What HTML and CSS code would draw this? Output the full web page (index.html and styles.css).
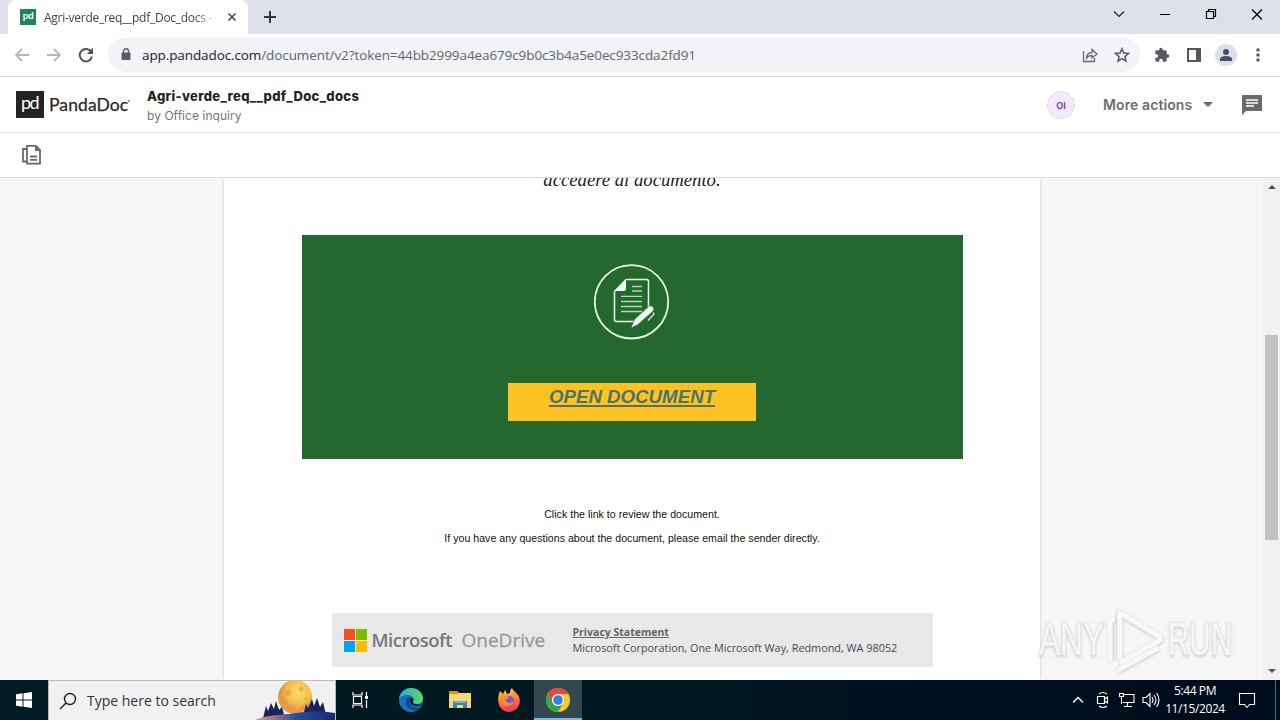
FILE: index.html
```html
<!DOCTYPE html>
<html lang="en">
<head>
    <meta charset="UTF-8">
    <meta name="viewport" content="width=device-width, initial-scale=1.0">
    <title>Agri-verde_req__pdf_Doc_docs</title>
    <link rel="stylesheet" href="styles.css">
</head>
<body>
    <div class="desktop">
        <!-- Tab strip -->
        <div class="tab-strip">
            <div class="tab">
                <span class="favicon">pd</span>
                <span class="tab-title">Agri-verde_req__pdf_Doc_docs -</span>
                <svg class="tab-close" width="10" height="10" viewBox="0 0 10 10"><path d="M1.5 1.5l7 7M8.5 1.5l-7 7" stroke="#45484c" stroke-width="1.6"/></svg>
            </div>
            <svg class="new-tab" width="14" height="14" viewBox="0 0 14 14"><path d="M7 1v12M1 7h12" stroke="#33363c" stroke-width="2"/></svg>
            <div class="window-controls">
                <svg width="46" height="28" viewBox="0 0 46 28"><path d="M18 11.5l5 5 5-5" fill="none" stroke="#222" stroke-width="1.2"/></svg>
                <svg width="46" height="28" viewBox="0 0 46 28"><path d="M18 14.5h10" stroke="#000"/></svg>
                <svg width="46" height="28" viewBox="0 0 46 28"><path d="M18.5 11.500h7v7h-7zM20.500 11.500v-2h7v7h-2" fill="none" stroke="#000" stroke-width="1.200"/></svg>
                <svg width="46" height="28" viewBox="0 0 46 28"><path d="M18 9.500l10 10M28 9.500l-10 10" stroke="#000" stroke-width="1.200"/></svg>
            </div>
        </div>

        <!-- Address bar -->
        <div class="browser-bar">
            <svg class="nav-icon" width="16" height="16" viewBox="0 0 16 16"><path d="M15 8H2M8 2L2 8l6 6" fill="none" stroke="#b4b6b9" stroke-width="1.8"/></svg>
            <svg class="nav-icon" width="16" height="16" viewBox="0 0 16 16"><path d="M1 8h13M8 2l6 6-6 6" fill="none" stroke="#b4b6b9" stroke-width="1.8"/></svg>
            <svg class="nav-icon" width="16" height="16" viewBox="0 0 16 16"><path d="M13.300 5A6.200 6.200 0 1 0 14 9.500" fill="none" stroke="#4c4f54" stroke-width="1.900"/><path d="M15 .800v6.200H8.800z" fill="#4c4f54"/></svg>
            <div class="address">
                <svg width="10" height="13" viewBox="0 0 10 13"><path d="M2.500 6V3.300a2.500 2.500 0 0 1 5 0V6" fill="none" stroke="#5a5d62" stroke-width="1.400"/><rect x=".5" y="4.500" width="9" height="7.500" rx="1" fill="#5a5d62"/></svg>
                <span class="url"><b>app.pandadoc.com</b>/document/v2?token=44bb2999a4ea679c9b0c3b4a5e0ec933cda2fd91</span>
                <svg class="share" width="16" height="16" viewBox="0 0 16 16"><path d="M1.500 4v10.500h11V11M4.500 11c.3-4 2.500-5.500 5.500-5.500v-3L15 7l-5 4V8.500C7.500 8.500 6 9 4.500 11z" fill="none" stroke="#666a6e" stroke-width="1.300"/></svg>
                <svg width="16" height="16" viewBox="0 0 16 16"><path d="M8 1.700l1.800 4.400 4.700.4-3.600 3.100 1.100 4.600L8 11.700l-4 2.500 1.100-4.600L1.500 6.500l4.700-.4z" fill="none" stroke="#565a60" stroke-width="1.500"/></svg>
            </div>
            <div class="extensions">
                <svg width="16" height="16" viewBox="0 0 24 24"><path fill="#565a62" d="M20.500 11H19V7a2 2 0 0 0-2-2h-4V3.500a2.500 2.500 0 0 0-5 0V5H4a2 2 0 0 0-2 2v3.800h1.500a2.700 2.700 0 0 1 0 5.400H2V20a2 2 0 0 0 2 2h3.800v-1.500a2.700 2.700 0 0 1 5.400 0V22H17a2 2 0 0 0 2-2v-4h1.500a2.500 2.500 0 0 0 0-5z"/></svg>
                <svg width="16" height="16" viewBox="0 0 16 16"><path d="M1 1h14v14H1zM3 3v10h7V3z" fill="#54575d" fill-rule="evenodd"/></svg>
                <span class="profile"><svg width="14" height="14" viewBox="0 0 14 14"><circle cx="7" cy="4" r="3" fill="#494f66"/><path d="M1 13v-2c0-2 3-3 6-3s6 1 6 3v2z" fill="#494f66"/></svg></span>
                <svg class="menu-dots" width="4" height="14" viewBox="0 0 4 14"><path d="M.5.5h3v3h-3zM.5 5.500h3v3h-3zM.5 10.500h3v3h-3z" fill="#54575d"/></svg>
            </div>
        </div>

        <!-- PandaDoc header -->
        <div class="app-header">
            <span class="logo-mark">pd</span>
            <span class="logo-text">PandaDoc<i></i></span>
            <div class="doc-info">
                <div class="doc-name">Agri-verde_req__pdf_Doc_docs</div>
                <div class="doc-author">by Office inquiry</div>
            </div>
            <span class="avatar">OI</span>
            <span class="more-actions">More actions</span>
            <span class="caret"></span>
            <svg class="chat" width="20" height="20" viewBox="0 0 20 20"><path d="M0 0h20v16H4l-4 4z" fill="#6b6b6b"/><path d="M4 5h12M4 8h12M4 11h8" stroke="#fff" stroke-width="1.500"/></svg>
        </div>
        <div class="app-toolbar">
            <svg width="20" height="20" viewBox="0 0 20 20"><path d="M5 .900h9l4 4.300V18.600H5zM5 4H1v12.500h4M8 11.500h7M8 14.800h7" fill="none" stroke="#6a6a6a" stroke-width="1.800"/><path d="M13 1v5h5z" fill="#6a6a6a"/></svg>
        </div>

        <!-- Document -->
        <div class="viewer">
            <div class="page">
                <div class="intro">accedere al documento.</div>
                <div class="banner">
                    <svg class="doc-icon" width="76" height="76" viewBox="0 0 76 76">
                        <circle cx="37.500" cy="37.800" r="36.700" fill="none" stroke="#e2f7df" stroke-width="1.800"/>
                        <path d="M32 15.500h20.500q2 0 2 2V45M41 57.500H22.500q-2 0-2-2V27.500L32 15.500" fill="none" stroke="#e9fbe6" stroke-width="1.500"/>
                        <path d="M21 27L32 16v9q0 2-2 2z" fill="#f3fff0"/>
                        <path d="M38 22.500h10M38 27h10M27 32.300h21M27 37.500h21M27 42.500h21M27 47.500h21" stroke="#b4d9ae" stroke-width="1.300"/>
                        <path d="M37 64l3.500-8.500L54 43q3-2.500 5 0 2 2-.5 4.500L44 60.500z" fill="#f3fff0" stroke="#25682f" stroke-width=".6"/>
                        <path d="M59 48.500l1 1.500-6 6.500" fill="none" stroke="#d2efcc" stroke-width="1.200"/>
                    </svg>
                    <div class="open-button"><span>OPEN DOCUMENT</span></div>
                </div>
                <p class="note">Click the link to review the document.</p>
                <p class="note note-wide">If you have any questions about the document, please email the sender directly.</p>
                <div class="ms-footer">
                    <div class="ms-logo"><i></i><i></i><i></i><i></i></div>
                    <span class="ms-name">Microsoft</span>
                    <span class="od-name">OneDrive</span>
                    <div class="ms-address">
                        <u>Privacy Statement</u>
                        <span>Microsoft Corporation, One Microsoft Way, Redmond, WA 98052</span>
                    </div>
                </div>
            </div>
            <div class="scrollbar"><div class="thumb"></div></div>
            <svg class="watermark" width="204" height="72" viewBox="0 0 204 72">
                <g class="mark-shade"><text x="3" y="52" textLength="65" lengthAdjust="spacingAndGlyphs">ANY</text><text x="132" y="52" textLength="64" lengthAdjust="spacingAndGlyphs">RUN</text><path d="M75 57V19q0-3 5-3M84 57V10l40 24v3L84 60M82 67l40-22"/></g>
                <g class="mark-light"><text x="3" y="51" textLength="65" lengthAdjust="spacingAndGlyphs">ANY</text><text x="132" y="51" textLength="64" lengthAdjust="spacingAndGlyphs">RUN</text><path d="M74 57V19q0-4 5-4M84 56V9l40 24v3L84 59M82 66l40-22"/></g>
            </svg>
        </div>

        <!-- Taskbar -->
        <div class="taskbar">
            <div class="start"><svg width="16" height="16" viewBox="0 0 16 16"><path d="M0 2.200L6.500 1.300V7.500H0zM7.500 1.200L16 0v7.500H7.500zM0 8.500h6.500v6.200L0 13.800zM7.500 8.500H16V16l-8.500-1.200z" fill="#fff"/></svg></div>
            <div class="search">
                <svg width="18" height="18" viewBox="0 0 18 18"><circle cx="11" cy="7" r="5.500" fill="none" stroke="#222" stroke-width="1.400"/><path d="M7 11l-6 6" stroke="#222" stroke-width="1.400"/></svg>
                <span>Type here to search</span>
                <svg class="moon" width="80" height="39" viewBox="0 0 80 39">
                    <defs>
                        <linearGradient id="hill"><stop offset="0" stop-color="#d59a91"/><stop offset=".25" stop-color="#a06f82"/><stop offset=".5" stop-color="#294ca0"/><stop offset="1" stop-color="#182a70"/></linearGradient>
                        <radialGradient id="moonFill" cx=".6" cy=".35"><stop offset="0" stop-color="#ffdd72"/><stop offset=".7" stop-color="#f5bd4c"/><stop offset="1" stop-color="#e49a43"/></radialGradient>
                    </defs>
                    <circle cx="40" cy="16" r="17" fill="url(#moonFill)"/>
                    <circle cx="33" cy="12" r="3" fill="#e9aa42"/><circle cx="46" cy="8" r="2.500" fill="#edb24a"/><circle cx="42" cy="25" r="3" fill="#eab050"/><circle cx="51" cy="18" r="2" fill="#edb24a"/>
                    <path d="M8 37l3-12 2 5 3-8 3 6 2-8 3 9 3-3 3 11zM48 35l3-12 2 4 4-9 2 7 3-8 3 9 3-5 3 13z" fill="#17245f"/>
                    <path d="M0 39c12-5 23-5 34-6 15-2 24-4 46-1v7z" fill="url(#hill)"/>
                </svg>
            </div>
            <div class="task task-view"><svg width="18" height="18" viewBox="0 0 18 18"><path d="M2 1v3h9V1M2 17v-3h9v3M2.500 5.500h8v7h-8zM15.500 1v4M15.500 9v8" fill="none" stroke="#fff" stroke-width="1.200"/><path d="M14 5h3v3h-3z" fill="#fff"/></svg></div>
            <div class="task"><svg width="24" height="24" viewBox="0 0 24 24">
                <defs><linearGradient id="edgeTop"><stop offset="0" stop-color="#2ba9e1"/><stop offset="1" stop-color="#61d65b"/></linearGradient></defs>
                <circle cx="12" cy="12" r="12" fill="#1870bd"/>
                <path d="M0 11C1 4 6 0 12 0c7 0 12 5 12 10 0 4-3 6-6 6-3 0-5-1-4-3 2-3-1-6-5-6-5 0-8 2-9 4z" fill="url(#edgeTop)"/>
                <path d="M9 9c-4 3-3 12 5 13 3 .5 6-.5 8-3-3 1-7 1-9-1-3-2-3-6-1-8z" fill="#114b91"/>
                <path d="M12 10c3 0 3 2 2 3-1 3 5 5 9 2-1 3-6 4-9 2-3-1-4-5-2-7z" fill="#001b27"/>
            </svg></div>
            <div class="task"><svg width="22" height="20" viewBox="0 0 22 20"><path d="M0 1h8l2 2h12v4H0z" fill="#dc941c"/><path d="M0 3h22v15H0z" fill="#f9d76f"/><path d="M0 1h8l2 2-2 1H0z" fill="#dc941c"/><path d="M4 18v-7h14v7h-4v-3H8v3z" fill="#3384bd"/><path d="M5 12h12" stroke="#69b1db" stroke-width="2"/></svg></div>
            <div class="task"><svg width="24" height="24" viewBox="0 0 24 24">
                <defs><linearGradient id="fox" x2=".2" y2="1"><stop offset="0" stop-color="#ffdd43"/><stop offset=".5" stop-color="#ff8a32"/><stop offset="1" stop-color="#f23a54"/></linearGradient></defs>
                <path d="M3 3l3 3 2-4 2 4 3-1c0-3 1-4 2-5 1 3 4 4 6 7 5 8-1 17-9 17C4 24-2 15 3 3z" fill="url(#fox)"/><circle cx="12" cy="13" r="5.300" fill="#8552cc"/><path d="M4 7c4-1 6 1 8 2-1 2-3 2-4 3 2 4 6 4 9 1-1 6-10 7-13 1z" fill="#ff8d28"/>
            </svg></div>
            <div class="task active"><svg width="24" height="24" viewBox="0 0 24 24"><circle cx="12" cy="12" r="12" fill="#fbc72d"/><path d="M1.600 6A12 12 0 0 1 22.400 6H12a6 6 0 0 0-5.200 9z" fill="#e6483d"/><path d="M1.600 6l5.200 9A6 6 0 0 0 12 18l5.200-3L12 24A12 12 0 0 1 1.600 6z" fill="#31a652"/><circle cx="12" cy="12" r="6" fill="#fff"/><circle cx="12" cy="12" r="4.800" fill="#347feb"/></svg></div>
            <div class="tray">
                <svg width="12" height="8" viewBox="0 0 12 8"><path d="M1 6.500l5-5 5 5" fill="none" stroke="#fff" stroke-width="1.300"/></svg>
                <svg class="meet" width="14" height="18" viewBox="0 0 14 18"><path d="M1.500 5.500h7v7h-7zM8.500 8l3-2v6l-3-2M3 3q4-3 8 0M3 15q4 3 8 0" fill="none" stroke="#fff" stroke-width="1.200"/></svg>
                <svg width="18" height="16" viewBox="0 0 18 16"><path d="M5 2.500h11v8H5M9.500 10.500V14M6 14.500h8M1.500 1.500h4v3h-4zM3.500 5v7" fill="none" stroke="#fff" stroke-width="1.100"/></svg>
                <svg width="18" height="16" viewBox="0 0 18 16"><path d="M1 5.500h3l4-4v13l-4-4H1zM10 5q2 3 0 6M12 3q4 5 0 10M14.500 1q5 7 0 14" fill="none" stroke="#fff" stroke-width="1.100"/></svg>
                <div class="clock"><span>5:44 PM</span><span class="date">11/15/2024</span></div>
                <svg class="notify" width="18" height="17" viewBox="0 0 18 17"><path d="M1.500 1.500h15v11h-5l-2.500 3-2.500-3h-5z" fill="none" stroke="#fff" stroke-width="1.100"/></svg>
                <div class="show-desktop"></div>
            </div>
        </div>
    </div>
</body>
</html>
```

FILE: styles.css
```css
* {
    margin: 0;
    padding: 0;
    box-sizing: border-box;
}

body {
    font-family: "Open Sans", sans-serif;
    background: #fff;
    overflow: hidden;
}

svg {
    display: block;
    flex-shrink: 0;
}

.desktop {
    width: 1280px;
    height: 720px;
    display: flex;
    flex-direction: column;
    white-space: nowrap;
}

.tab-strip {
    height: 34px;
    background: #dee1e9;
    display: flex;
    padding-left: 8px;
}

.tab {
    width: 240px;
    background: #fff;
    border-radius: 8px 8px 0 0;
    display: flex;
    align-items: center;
    padding-left: 12px;
}

.favicon {
    width: 16px;
    height: 16px;
    background: #218260;
    color: #fff;
    font: bold 10px/13px Lato, sans-serif;
    text-align: center;
    letter-spacing: -.5px;
}

.tab-title {
    width: 175px;
    margin-left: 8px;
    font-size: 12px;
    letter-spacing: -.27px;
    color: #414347;
    -webkit-mask-image: linear-gradient(90deg, #000 150px, transparent 175px);
}

.tab-close {
    margin-left: 8px;
}

.new-tab {
    margin: 10px 0 0 15px;
}

.window-controls {
    display: flex;
    margin-left: auto;
}

.browser-bar {
    height: 43px;
    border-bottom: 1px solid #dadada;
    display: flex;
    align-items: center;
    padding: 0 20px 1px 14px;
}

.nav-icon {
    margin-right: 16px;
}

.address {
    width: 1032px;
    height: 34px;
    margin-left: -2px;
    background: #f1f3f6;
    border-radius: 17px;
    display: flex;
    align-items: center;
    padding: 0 10px 0 13px;
}

.url {
    margin-left: 11px;
    font-size: 13.5px;
    letter-spacing: -.1px;
    color: #626569;
}

.url b {
    font-weight: normal;
    color: #202226;
}

.share {
    margin: 0 16px 0 auto;
}

.extensions {
    display: flex;
    align-items: center;
    margin-left: 14px;
}

.extensions > svg:nth-child(2) {
    margin: 0 13px 0 16px;
}

.profile {
    width: 22px;
    height: 22px;
    border-radius: 50%;
    background: #dce0eb;
    display: flex;
    align-items: center;
    justify-content: center;
}

.menu-dots {
    margin-left: 19px;
}

.app-header {
    height: 56px;
    border-bottom: 1px solid #ddd;
    display: flex;
    align-items: center;
    padding: 0 18px 0 16px;
    font-family: Inter, sans-serif;
}

.logo-mark {
    width: 28px;
    height: 27px;
    background: #242424;
    color: #fff;
    font: 18px/23px Lato, sans-serif;
    text-align: center;
    letter-spacing: -1.6px;
    padding-right: 1px;
}

.logo-text {
    width: 82px;
    margin-left: 5px;
    font: 17.5px/27px Lato, sans-serif;
    color: #282828;
    letter-spacing: .1px;
    -webkit-text-stroke: .25px #282828;
}

.logo-text i {
    display: inline-block;
    width: 2px;
    height: 2px;
    border-radius: 50%;
    background: #777;
    vertical-align: 9px;
}

.doc-info {
    width: 240px;
    margin-left: 16px;
    padding-top: 3px;
}

.doc-name {
    font-size: 13px;
    line-height: 19px;
    font-weight: 800;
    letter-spacing: .35px;
    color: #222;
}

.doc-author {
    font-size: 12px;
    line-height: 19px;
    letter-spacing: .05px;
    color: #777;
}

.avatar {
    width: 28px;
    height: 28px;
    margin-left: auto;
    border: 1px solid #e3d9ec;
    border-radius: 50%;
    background: #f3e9fc;
    color: #6a2db0;
    font-size: 9px;
    line-height: 27px;
    font-weight: 600;
    text-align: center;
}

.more-actions {
    width: 90px;
    margin-left: 28px;
    font-size: 14px;
    font-weight: 600;
    letter-spacing: .1px;
    color: #6d6d6d;
}

.caret {
    margin: 0 29px 0 10px;
    border: 5px solid transparent;
    border-top-color: #6d6d6d;
    border-bottom: 0;
}

.app-toolbar {
    height: 45px;
    border-bottom: 1px solid #dcdcdc;
    padding: 12px 22px;
}

.viewer {
    height: 502px;
    background: #f6f6f6;
    position: relative;
    display: flex;
    overflow: hidden;
}

.page {
    width: 816px;
    margin-left: 224px;
    background: #fff;
    box-shadow: 0 0 3px rgba(0, 0, 0, .18);
    display: flex;
    flex-direction: column;
    align-items: center;
}

/* scrolled half way under the toolbar */
.intro {
    height: 66px;
    margin-top: -9px;
    font: italic 18.7px/22px "Liberation Serif", serif;
    color: #222;
}

.banner {
    width: 661px;
    height: 224px;
    background: #25682f;
    display: flex;
    flex-direction: column;
    align-items: center;
    padding-top: 29px;
}

.open-button {
    width: 248px;
    height: 38px;
    margin-top: 43px;
    background: #ffc222;
    text-align: center;
    font: italic bold 18.7px/27px "Liberation Sans", sans-serif;
    color: #4b7469;
    text-decoration: underline;
    text-decoration-thickness: 2px;
    text-decoration-skip-ink: none;
    text-underline-offset: 2px;
}

.note {
    margin-top: 43px;
    font: 10.65px/24px "Liberation Sans", sans-serif;
    color: #111;
}

.note-wide {
    margin-top: 0;
}

.ms-footer {
    width: 601px;
    height: 54px;
    margin-top: 63px;
    background: #e8e8e8;
    display: flex;
    align-items: center;
    padding-left: 12px;
}

.ms-logo {
    width: 23px;
    display: grid;
    grid-template-columns: 11px 11px;
    grid-auto-rows: 11px;
    gap: 1px;
}

.ms-logo i {
    background: #f25022;
}

.ms-logo i:nth-child(2) {
    background: #7fba00;
}

.ms-logo i:nth-child(3) {
    background: #00a4ef;
}

.ms-logo i:nth-child(4) {
    background: #ffb900;
}

.ms-name {
    width: 90px;
    margin-left: 5px;
    padding-bottom: 2px;
    font-size: 18.5px;
    font-weight: 600;
    color: #777;
    letter-spacing: -.5px;
}

.od-name {
    width: 110px;
    font-size: 19px;
    color: #999;
    -webkit-text-stroke: .3px #999;
}

.ms-address {
    display: flex;
    flex-direction: column;
    font-size: 10.85px;
    line-height: 15px;
    color: #484848;
    padding: 0 0 0 1px;
}

.ms-address u {
    font-size: 10.5px;
    font-weight: bold;
    color: #666;
}

.scrollbar {
    width: 17px;
    height: 502px;
    margin-left: auto;
    background: #f1f1f1;
    display: flex;
    flex-direction: column;
    align-items: center;
}

.scrollbar::before {
    content: "";
    margin-top: 7px;
    border: 4px solid transparent;
    border-bottom-color: #505050;
    border-top: 0;
}

.scrollbar::after {
    content: "";
    margin: auto 0 7px;
    border: 4px solid transparent;
    border-top-color: #505050;
    border-bottom: 0;
}

.thumb {
    width: 13px;
    height: 205px;
    margin-top: 146px;
    background: #c1c1c1;
}

.watermark {
    position: absolute;
    left: 1036px;
    top: 426px;
    font: 47px "Liberation Sans", sans-serif;
}

.mark-shade {
    fill: #ccc;
    stroke: #ccc;
    stroke-width: 3;
    opacity: .75;
    filter: blur(1.2px);
}

.mark-light {
    fill: #f6f6f6;
}

.watermark path {
    fill: none;
    stroke-width: 7;
}

.mark-light path {
    stroke: #f8f8f8;
    stroke-width: 5;
}

.taskbar {
    height: 40px;
    background: linear-gradient(90deg, #001b22 0, #001820 650px, #00101f 950px, #000b1b);
    display: flex;
}

.start {
    width: 48px;
    padding: 12px 16px;
}

.search {
    width: 288px;
    background: #f1f1f1;
    border: 1px solid #bbb;
    border-width: 1px 1px 0;
    display: flex;
    align-items: center;
    padding-left: 10px;
    color: #333;
    font-size: 14px;
}

.search span {
    margin-left: 10px;
}

.moon {
    margin-left: auto;
}

.task {
    width: 48px;
    margin-right: 1px;
    display: flex;
    align-items: center;
    justify-content: center;
}

.task-view {
    width: 50px;
    padding-right: 2px;
}

.task.active {
    background: #33474f;
    border-bottom: 2px solid #76b9ed;
    padding-top: 2px;
}

.tray {
    margin-left: auto;
    display: flex;
    align-items: center;
    color: #fff;
    font-size: 12px;
}

.meet {
    margin: 0 8px 0 12px;
}

.tray svg + svg + svg + svg {
    margin-left: 6px;
}

.clock {
    width: 64px;
    margin: 0 11px 0 3px;
    display: flex;
    flex-direction: column;
    align-items: center;
    line-height: 18px;
    letter-spacing: -.4px;
}

.show-desktop {
    width: 5px;
    height: 40px;
    margin-left: 19px;
    border-left: 1px solid #59636c;
}
```
